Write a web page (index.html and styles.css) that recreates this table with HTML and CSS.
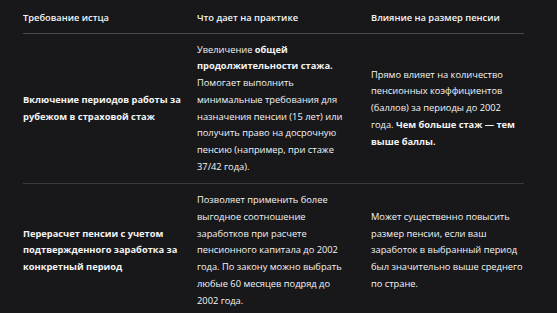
FILE: index.html
```html
<!DOCTYPE html>
<html lang="ru">
<head>
<meta charset="utf-8">
<link rel="stylesheet" href="styles.css">
</head>
<body>
<div class="wrap">
  <table class="table">
    <colgroup>
      <col class="c1">
      <col class="c2">
      <col class="c3">
    </colgroup>
    <thead>
      <tr>
        <th>Требование истца</th>
        <th class="mid">Что дает на практике</th>
        <th class="last">Влияние на размер пенсии</th>
      </tr>
    </thead>
    <tbody>
      <tr>
        <td class="strong">Включение периодов работы за рубежом в страховой стаж</td>
        <td class="mid">Увеличение <b>общей продолжительности стажа.</b> Помогает выполнить минимальные требования для назначения пенсии (15 лет) или получить право на досрочную пенсию (например, при стаже 37/42 года).</td>
        <td class="last">Прямо влияет на количество пенсионных коэффициентов (баллов) за периоды до 2002 года. <b>Чем больше стаж — тем выше баллы.</b></td>
      </tr>
      <tr>
        <td class="strong">Перерасчет пенсии с учетом подтвержденного заработка за конкретный период</td>
        <td class="mid">Позволяет применить более выгодное соотношение заработков при расчете пенсионного капитала до 2002 года. По закону можно выбрать любые 60 месяцев подряд до 2002 года.</td>
        <td class="last">Может существенно повысить размер пенсии, если ваш заработок в выбранный период был значительно выше среднего по стране.</td>
      </tr>
    </tbody>
  </table>
</div>
</body>
</html>
```
FILE: styles.css
```css
html, body {
  margin: 0;
  padding: 0;
  background: #18181b;
}
body {
  color: #f4f4f4;
  font-family: "Open Sans", "Noto Sans", sans-serif;
  font-size: 9.3px;
  font-weight: 500;
  line-height: 16.7px;
}
.wrap {
  padding: 0 33px 0 23px;
}
.table {
  width: 501px;
  table-layout: fixed;
  border-collapse: collapse;
}
.c1, .c2 {
  width: 174px;
}
.c3 {
  width: 153px;
}
th, td {
  text-align: left;
  vertical-align: middle;
  padding: 8px 16px 8px 0;
  border-bottom: 1px solid #3a3a3e;
}
th {
  font-weight: 600;
  padding-top: 10px;
  padding-bottom: 6px;
  border-bottom-color: #48484d;
}
th.mid, td.mid {
  padding-right: 19px;
}
th.last, td.last {
  padding-right: 0;
}
.strong, b {
  font-weight: 700;
}
```
